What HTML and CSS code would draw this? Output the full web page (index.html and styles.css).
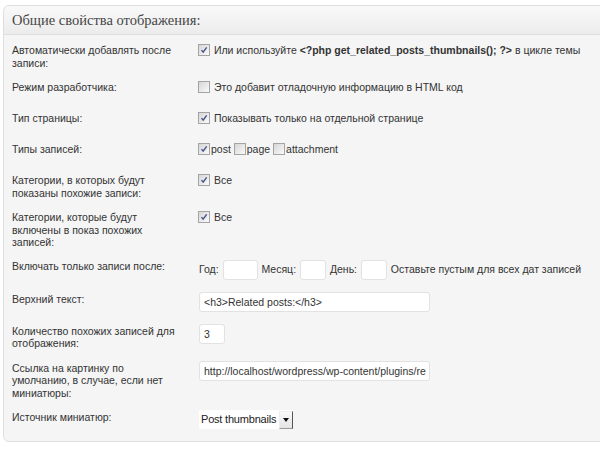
FILE: index.html
```html
<!DOCTYPE html>
<html lang="ru">
<head>
  <meta charset="UTF-8">
  <title>Общие свойства отображения</title>
  <link rel="stylesheet" href="styles.css">
</head>
<body>
  <!-- блок настроек -->
  <div class="postbox">
    <h3 class="hndle">Общие свойства отображения:</h3>
    <div class="inside">

      <div class="row">
        <div class="lbl">Автоматически добавлять после<br>записи:</div>
        <div class="val">
          <span class="chk on"><svg viewBox="0 0 12 12"><path d="M3 6.2 L5 8.6 L9.2 2.8"/></svg></span>
          Или используйте <b>&lt;?php get_related_posts_thumbnails(); ?&gt;</b> в цикле темы
        </div>
      </div>

      <div class="row">
        <div class="lbl">Режим разработчика:</div>
        <div class="val">
          <span class="chk"></span>
          Это добавит отладочную информацию в HTML код
        </div>
      </div>

      <div class="row">
        <div class="lbl">Тип страницы:</div>
        <div class="val">
          <span class="chk on"><svg viewBox="0 0 12 12"><path d="M3 6.2 L5 8.6 L9.2 2.8"/></svg></span>
          Показывать только на отдельной странице
        </div>
      </div>

      <div class="row">
        <div class="lbl">Типы записей:</div>
        <div class="val">
          <span class="chk on"><svg viewBox="0 0 12 12"><path d="M3 6.2 L5 8.6 L9.2 2.8"/></svg></span>post
          <span class="chk"></span>page
          <span class="chk"></span>attachment
        </div>
      </div>

      <div class="row">
        <div class="lbl">Категории, в которых будут<br>показаны похожие записи:</div>
        <div class="val">
          <span class="chk on"><svg viewBox="0 0 12 12"><path d="M3 6.2 L5 8.6 L9.2 2.8"/></svg></span>
          Все
        </div>
      </div>

      <div class="row">
        <div class="lbl">Категории, которые будут<br>включены в показ похожих<br>записей:</div>
        <div class="val">
          <span class="chk on"><svg viewBox="0 0 12 12"><path d="M3 6.2 L5 8.6 L9.2 2.8"/></svg></span>
          Все
        </div>
      </div>

      <div class="row row-inp">
        <div class="lbl lbl-dates">Включать только записи после:</div>
        <div class="val dates">
          Год: <span class="inp w-year"></span>
          Месяц: <span class="inp w-small"></span>
          День: <span class="inp w-small"></span>
          Оставьте пустым для всех дат записей
        </div>
      </div>

      <div class="row row-inp">
        <div class="lbl">Верхний текст:</div>
        <div class="val"><span class="inp w-wide">&lt;h3&gt;Related posts:&lt;/h3&gt;</span></div>
      </div>

      <div class="row row-inp">
        <div class="lbl">Количество похожих записей для<br>отображения:</div>
        <div class="val"><span class="inp w-num">3</span></div>
      </div>

      <div class="row row-inp">
        <div class="lbl">Ссылка на картинку по<br>умолчанию, в случае, если нет<br>миниатюры:</div>
        <div class="val"><span class="inp w-wide">http://localhost/wordpress/wp-content/plugins/re</span></div>
      </div>

      <div class="row row-inp last">
        <div class="lbl">Источник миниатюр:</div>
        <div class="val">
          <span class="sel">Post thumbnails<span class="sel-btn"></span></span>
        </div>
      </div>

    </div>
  </div>
</body>
</html>
```

FILE: styles.css
```css
html, body{
  margin: 0;
  padding: 0;
}

body{
  background-color: #fff;
  overflow: hidden;
  font-family: "Liberation Sans", Arial, sans-serif;
  font-size: 10.5px;
  color: #333;
}

/* 박스 */
.postbox{
  width: 640px;
  margin: 5px 0 0 3px;
  border: 1px solid #dfdfdf;
  border-radius: 6px;
  background-color: #f5f5f5;
}

.hndle{
  margin: 0;
  height: 28px;
  padding-left: 8px;
  line-height: 28px;
  font-family: "Liberation Serif", Georgia, serif;
  font-size: 14.5px;
  font-weight: normal;
  color: #464646;
  background-image: linear-gradient(to bottom, #f9f9f9, #ececec);
  border-bottom: 1px solid #dfdfdf;
  border-radius: 6px 6px 0 0;
}

.inside{
  padding: 3px 0 4px;
}

/* 줄 */
.row{
  display: flex;
  align-items: flex-start;
  min-height: 31px;
}

.lbl{
  width: 194px;
  flex-shrink: 0;
  padding: 6px 0 6px 8px;
  line-height: 12.5px;
  box-sizing: border-box;
}
.lbl-dates{
  padding-top: 5px;
}

.val{
  padding: 5px 0 6px;
  line-height: 15px;
}

.row-inp{
  min-height: 32px;
}
.row-inp .val{
  padding: 5px 0 7px 1px;
}

/* 체크박스 */
.chk{
  display: inline-block;
  width: 10px;
  height: 10px;
  border: 1px solid #a4a4a4;
  background-image: linear-gradient(135deg, #d6d6d6, #fafafa);
  vertical-align: -2px;
  margin-right: 1px;
}
.chk svg{
  display: block;
  width: 10px;
  height: 10px;
}
.chk path{
  fill: none;
  stroke: #43538a;
  stroke-width: 1.7;
}

/* 입력칸 */
.inp{
  display: inline-block;
  height: 18px;
  line-height: 18px;
  padding: 0 4px;
  border: 1px solid #e2e2e2;
  border-radius: 3px;
  background-color: #fff;
  vertical-align: middle;
  box-sizing: content-box;
  white-space: nowrap;
  overflow: hidden;
}
.w-year{ width: 25px; }
.w-small{ width: 16px; }
.w-num{ width: 16px; }
.w-wide{ width: 221px; }

.dates .inp{
  margin: 0 1px;
}

/* 셀렉트 */
.sel{
  display: inline-flex;
  align-items: center;
  height: 19px;
  padding-left: 2px;
  background-color: #fff;
  font-size: 11px;
  letter-spacing: -0.2px;
  color: #222;
  vertical-align: middle;
}
.sel-btn{
  position: relative;
  width: 12px;
  height: 16px;
  margin-left: 3px;
  background-image: linear-gradient(to bottom, #fafafa, #e4e4e4);
  border: 1px solid #eee;
  border-right-color: #555;
  border-bottom-color: #999;
}
.sel-btn::after{
  content: '';
  position: absolute;
  left: 3px;
  top: 6px;
  border-left: 3px solid transparent;
  border-right: 3px solid transparent;
  border-top: 4px solid #111;
}
```
